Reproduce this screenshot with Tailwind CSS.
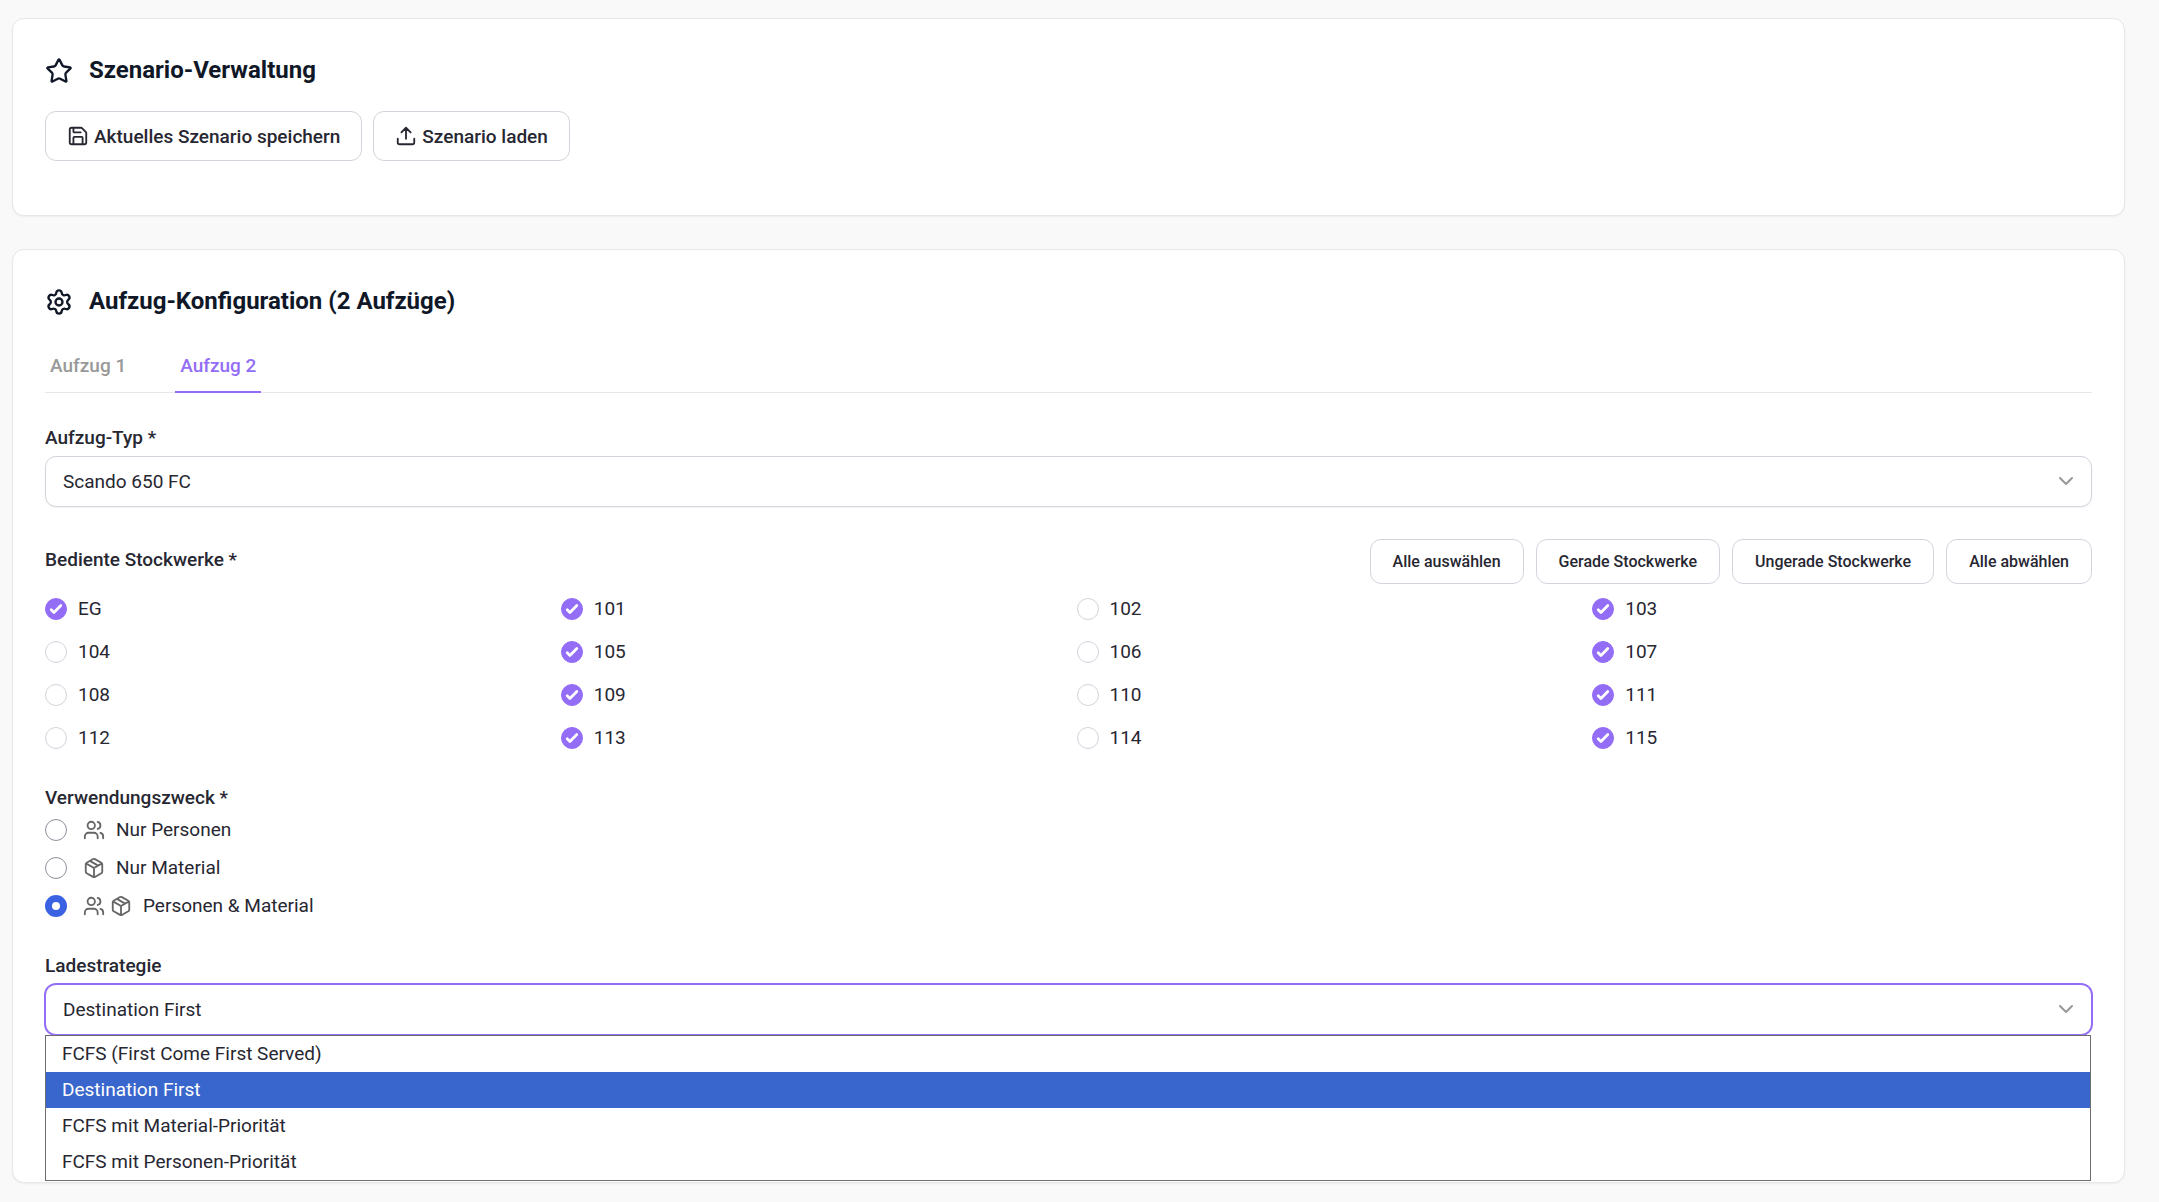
<!DOCTYPE html>
<html lang="de">
<head>
<meta charset="utf-8">
<title>Aufzug-Konfiguration</title>
<script src="https://cdn.jsdelivr.net/npm/@tailwindcss/browser@4"></script>
</head>
<body class="min-h-screen bg-[#f9f9f9] pt-[18px] pr-[34px] pb-5 pl-3 font-[Roboto,sans-serif] text-[19px] leading-[27px] text-[#272732]">
<svg class="hidden" aria-hidden="true">
  <symbol id="users" viewBox="0 0 24 24"><path d="M16 21v-2a4 4 0 0 0-4-4H6a4 4 0 0 0-4 4v2"/><circle cx="9" cy="7" r="4"/><path d="M22 21v-2a4 4 0 0 0-3-3.87M16 3.13a4 4 0 0 1 0 7.75"/></symbol>
  <symbol id="box" viewBox="0 0 24 24"><path d="M11 21.73a2 2 0 0 0 2 0l7-4A2 2 0 0 0 21 16V8a2 2 0 0 0-1-1.73l-7-4a2 2 0 0 0-2 0l-7 4A2 2 0 0 0 3 8v8a2 2 0 0 0 1 1.73zM12 22V12M3.29 7 12 12l8.71-5M7.5 4.27l9 5.15"/></symbol>
  <symbol id="chevron" viewBox="0 0 24 24"><path d="m6 9 6 6 6-6"/></symbol>
</svg>
<main class="flex flex-col gap-[33px]">
  <section class="h-[198px] rounded-xl border border-gray-200 bg-white p-8 shadow-xs">
    <h2 class="flex items-center gap-4 pt-[3px] text-2xl font-bold text-gray-900">
      <svg class="mt-0.5 size-7 fill-none stroke-current stroke-2" viewBox="0 0 24 24" stroke-linecap="round" stroke-linejoin="round"><path d="M11.525 2.295a.53.53 0 0 1 .95 0l2.31 4.679a2.123 2.123 0 0 0 1.595 1.16l5.166.756a.53.53 0 0 1 .294.904l-3.736 3.638a2.123 2.123 0 0 0-.611 1.878l.882 5.14a.53.53 0 0 1-.771.56l-4.618-2.428a2.122 2.122 0 0 0-1.973 0L6.396 21.01a.53.53 0 0 1-.77-.56l.881-5.139a2.122 2.122 0 0 0-.611-1.879L2.16 9.795a.53.53 0 0 1 .294-.906l5.165-.755a2.122 2.122 0 0 0 1.597-1.16z"/></svg>
      Szenario-Verwaltung
    </h2>
    <div class="mt-[25px] flex gap-[11px] font-medium">
      <button class="flex h-[50px] items-center gap-[5px] rounded-[11px] border border-gray-300 px-[21px]">
        <svg class="size-[22px] fill-none stroke-current stroke-2" viewBox="0 0 24 24" stroke-linecap="round" stroke-linejoin="round"><path d="M15.2 3a2 2 0 0 1 1.4.6l3.8 3.8a2 2 0 0 1 .6 1.4V19a2 2 0 0 1-2 2H5a2 2 0 0 1-2-2V5a2 2 0 0 1 2-2zM17 21v-7a1 1 0 0 0-1-1H8a1 1 0 0 0-1 1v7M7 3v4a1 1 0 0 0 1 1h7"/></svg>
        Aktuelles Szenario speichern
      </button>
      <button class="flex h-[50px] items-center gap-[5px] rounded-[11px] border border-gray-300 px-[21px]">
        <svg class="size-[22px] fill-none stroke-current stroke-2" viewBox="0 0 24 24" stroke-linecap="round" stroke-linejoin="round"><path d="M21 15v4a2 2 0 0 1-2 2H5a2 2 0 0 1-2-2v-4M17 8l-5-5-5 5M12 3v12"/></svg>
        Szenario laden
      </button>
    </div>
  </section>

  <section class="rounded-xl border border-gray-200 bg-white px-8 pt-8 pb-[147px] shadow-xs">
    <h2 class="flex items-center gap-4 pt-[3px] text-2xl font-bold text-gray-900">
      <svg class="mt-0.5 size-7 fill-none stroke-current stroke-2" viewBox="0 0 24 24" stroke-linecap="round" stroke-linejoin="round"><path d="M9.671 4.136a2.34 2.34 0 0 1 4.659 0 2.34 2.34 0 0 0 3.319 1.915 2.34 2.34 0 0 1 2.33 4.033 2.34 2.34 0 0 0 0 3.831 2.34 2.34 0 0 1-2.33 4.033 2.34 2.34 0 0 0-3.319 1.915 2.34 2.34 0 0 1-4.659 0 2.34 2.34 0 0 0-3.32-1.915 2.34 2.34 0 0 1-2.33-4.033 2.34 2.34 0 0 0 0-3.831A2.34 2.34 0 0 1 6.35 6.051a2.34 2.34 0 0 0 3.319-1.915"/><circle cx="12" cy="12" r="3"/></svg>
      Aufzug-Konfiguration (2 Aufzüge)
    </h2>

    <div class="mt-[22px] flex gap-11 border-b border-gray-200 font-medium" role="tablist">
      <button class="h-[53px] px-[5px] text-[#999999]" role="tab">Aufzug 1</button>
      <button class="-mb-px h-[54px] border-b-2 border-[#936df6] px-[5px] text-[#936df6]" role="tab" aria-selected="true">Aufzug 2</button>
    </div>

    <label for="typ" class="mt-[31px] block font-medium">Aufzug-Typ *</label>
    <div class="relative mt-[5px]">
      <select id="typ" class="block h-[51px] w-full appearance-none rounded-[11px] border border-gray-300 bg-white px-[17px] shadow-xs"><option>Scando 650 FC</option></select>
      <svg class="pointer-events-none absolute top-[13px] right-[14px] size-6 fill-none stroke-[#999999] stroke-2" stroke-linecap="round" stroke-linejoin="round"><use href="#chevron"/></svg>
    </div>

    <div class="mt-8 flex items-start justify-between">
      <span id="floors-label" class="mt-[7px] font-medium">Bediente Stockwerke *</span>
      <div class="flex gap-3 text-base font-medium">
        <button class="h-[45px] rounded-[11px] border border-gray-300 px-[22px]">Alle auswählen</button>
        <button class="h-[45px] rounded-[11px] border border-gray-300 px-[22px]">Gerade Stockwerke</button>
        <button class="h-[45px] rounded-[11px] border border-gray-300 px-[22px]">Ungerade Stockwerke</button>
        <button class="h-[45px] rounded-[11px] border border-gray-300 px-[22px]">Alle abwählen</button>
      </div>
    </div>
    <div id="floors" role="group" aria-labelledby="floors-label" class="mt-[11px] grid grid-cols-4 gap-4"></div>

    <fieldset class="mt-[33px]">
      <legend class="font-medium">Verwendungszweck *</legend>
      <div class="mt-[5px] flex flex-col gap-[11px]">
        <label class="flex items-center gap-[11px]">
          <input type="radio" name="zweck" class="mr-[5px] size-[22px] appearance-none rounded-full border border-[#8f8f9d] bg-white checked:border-[7px] checked:border-[#3b62e3]">
          <svg class="size-[22px] fill-none stroke-[#666666] stroke-2" stroke-linecap="round" stroke-linejoin="round"><use href="#users"/></svg>
          Nur Personen
        </label>
        <label class="flex items-center gap-[11px]">
          <input type="radio" name="zweck" class="mr-[5px] size-[22px] appearance-none rounded-full border border-[#8f8f9d] bg-white checked:border-[7px] checked:border-[#3b62e3]">
          <svg class="size-[22px] fill-none stroke-[#666666] stroke-2" stroke-linecap="round" stroke-linejoin="round"><use href="#box"/></svg>
          Nur Material
        </label>
        <label class="flex items-center gap-[11px]">
          <input type="radio" name="zweck" checked class="mr-[5px] size-[22px] appearance-none rounded-full border border-[#8f8f9d] bg-white checked:border-[7px] checked:border-[#3b62e3]">
          <span class="flex gap-[5px]">
            <svg class="size-[22px] fill-none stroke-[#666666] stroke-2" stroke-linecap="round" stroke-linejoin="round"><use href="#users"/></svg>
            <svg class="size-[22px] fill-none stroke-[#666666] stroke-2" stroke-linecap="round" stroke-linejoin="round"><use href="#box"/></svg>
          </span>
          Personen &amp; Material
        </label>
      </div>
    </fieldset>

    <label for="strategie" class="mt-[33px] block font-medium">Ladestrategie</label>
    <div class="relative mt-[5px]">
      <select id="strategie" class="block h-[51px] w-full appearance-none rounded-[11px] border border-[#936df6] bg-white px-[17px] ring ring-[#936df6]"><option>Destination First</option></select>
      <svg class="pointer-events-none absolute top-[13px] right-[14px] size-6 fill-none stroke-[#999999] stroke-2" stroke-linecap="round" stroke-linejoin="round"><use href="#chevron"/></svg>
      <ul role="listbox" class="absolute top-[51px] right-px left-0 border border-[#6e6e6e] bg-white leading-9">
        <li role="option" class="px-4">FCFS (First Come First Served)</li>
        <li role="option" aria-selected="true" class="bg-[#3966cc] px-4 text-white">Destination First</li>
        <li role="option" class="px-4">FCFS mit Material-Priorität</li>
        <li role="option" class="px-4">FCFS mit Personen-Priorität</li>
      </ul>
    </div>
  </section>
</main>
<script>
  const floors = ['EG', ...Array.from({ length: 15 }, (_, i) => String(101 + i))];
  document.getElementById('floors').innerHTML = floors.map((name, i) => `
    <label class="flex items-center gap-[11px]">
      <span class="grid size-[22px] place-items-center">
        <input type="checkbox" ${i === 0 || i % 2 ? 'checked' : ''} class="peer col-start-1 row-start-1 size-[22px] appearance-none rounded-full border border-gray-300 bg-white checked:border-[#936df6] checked:bg-[#936df6]">
        <svg class="pointer-events-none invisible col-start-1 row-start-1 size-[22px] fill-white peer-checked:visible" viewBox="0 0 16 16"><path d="M12.207 4.793a1 1 0 0 1 0 1.414l-5 5a1 1 0 0 1-1.414 0l-2-2a1 1 0 0 1 1.414-1.414L6.5 9.086l4.293-4.293a1 1 0 0 1 1.414 0z"/></svg>
      </span>
      ${name}
    </label>`).join('');
</script>
</body>
</html>
